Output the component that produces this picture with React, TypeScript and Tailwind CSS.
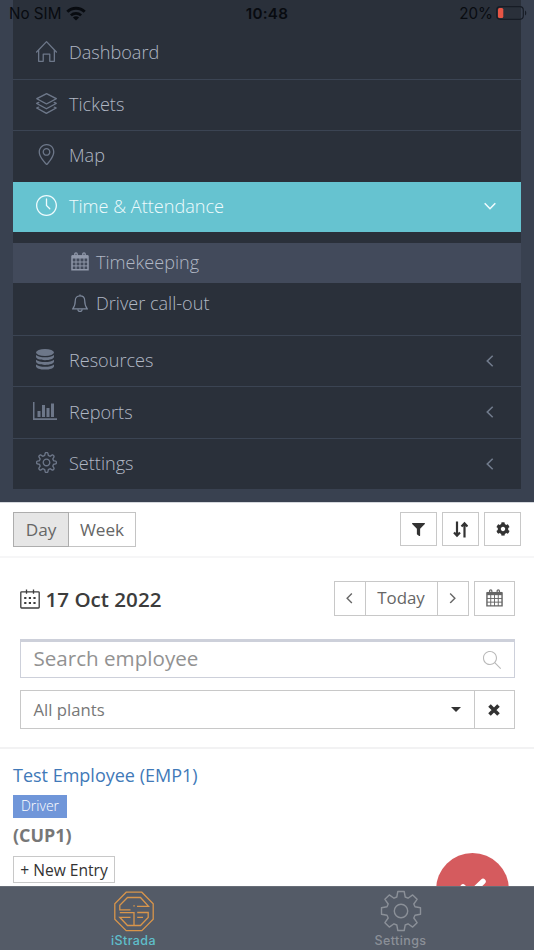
import type { ReactNode } from "react";
import clsx from "clsx";
import { FaCog, FaFilter } from "react-icons/fa";
import {
  SlClock,
  SlHome,
  SlLayers,
  SlLocationPin,
  SlMagnifier,
  SlSettings,
} from "react-icons/sl";

type IconProps = { className?: string };

function CalendarGrid({ className }: IconProps) {
  return (
    <svg viewBox="0 0 18 19" className={className} fill="none" stroke="currentColor">
      <path d="M1 4.2h16v13.6H1z" strokeWidth="1.5" />
      <path d="M1 4.800h16" strokeWidth="3.400" />
      <path d="M5 6v12M9 6v12M13 6v12M1 10h16M1 13.900h16" strokeWidth="1" />
      <rect x="3.800" y="0.800" width="2.400" height="4.400" rx="1.200" strokeWidth="1.300" />
      <rect x="11.800" y="0.800" width="2.400" height="4.400" rx="1.200" strokeWidth="1.300" />
    </svg>
  );
}

function CalendarDots({ className }: IconProps) {
  return (
    <svg viewBox="0 0 20 20" className={className} fill="none" stroke="currentColor" strokeWidth="1.300">
      <rect x="0.8" y="2.8" width="18.4" height="16.2" rx="0.8" />
      <path d="M6.5 0.5v4.2M13.5 0.5v4.2" />
      <path d="M4.200 9h11.5M4.200 14h11.5" strokeWidth="2.2" strokeDasharray="2.2 2.4" />
    </svg>
  );
}

function Bell({ className }: IconProps) {
  return (
    <svg viewBox="0 0 16 19" className={className} fill="none" stroke="currentColor" strokeWidth="1.200">
      <path d="M8 1.8c-3 0-4.7 2.1-4.7 4.8 0 4.3-.8 6.2-2.6 8.2h14.6c-1.8-2-2.6-3.9-2.6-8.2C12.700 3.900 11 1.800 8 1.800z" />
      <path d="M5.900 15.200c0 1.300.9 2.200 2.100 2.200s2.100-.9 2.100-2.200M8 .6v1.200" />
    </svg>
  );
}

function Database({ className }: IconProps) {
  return (
    <svg viewBox="0 0 18 21" className={className} fill="currentColor">
      <ellipse cx="9" cy="3.500" rx="9" ry="3.500" />
      <path d="M0 6c2 1.800 5 2.300 9 2.300S16 7.800 18 6v1.800c0 1.900-4 3.400-9 3.400S0 9.700 0 7.800z" />
      <path d="M0 10.700c2 1.800 5 2.300 9 2.300s7-.5 9-2.300v1.800c0 1.900-4 3.400-9 3.400s-9-1.500-9-3.400z" />
      <path d="M0 15.400c2 1.800 5 2.300 9 2.300s7-.5 9-2.300v1.800c0 1.900-4 3.400-9 3.400s-9-1.500-9-3.400z" />
    </svg>
  );
}

function BarChart({ className }: IconProps) {
  return (
    <svg viewBox="0 0 24 18" className={className} fill="currentColor">
      <path d="M0 0h1.500v16.300H24V18H0zM4.500 9h3v6h-3zM9 3h3v12H9zM13.500 6h3v9h-3zM18 1.500h3V15h-3z" />
    </svg>
  );
}

function Chevron({ className }: IconProps) {
  return (
    <svg viewBox="0 0 8 12" className={className} fill="none" stroke="currentColor" strokeWidth="1.600">
      <path d="M6.700 0.700 1.300 6l5.400 5.300" />
    </svg>
  );
}

function Wifi() {
  return (
    <svg viewBox="0 0 20 15" className="mb-px ml-[5px] h-[15px] w-5" fill="none" stroke="currentColor" strokeWidth="3">
      <path d="M1.300 5.700a12.400 12.400 0 0 1 17.400 0" />
      <path d="M4.900 9.400a7.300 7.300 0 0 1 10.200 0" strokeWidth="2.700" />
      <path d="M10 14.600 6.900 11.500a4.400 4.400 0 0 1 6.200 0z" fill="currentColor" stroke="none" />
    </svg>
  );
}

function StatusBar() {
  return (
    <div className="absolute inset-x-0 top-0 grid h-7 grid-cols-3 items-center pr-[7px] pl-[9px] font-['Inter',sans-serif] text-[15.200px] text-[#080b10]">
      <div className="flex items-center">
        No SIM
        <Wifi />
      </div>
      <div className="-ml-0.5 text-center font-semibold tracking-[0.3px]">10:48</div>
      <div className="flex items-center justify-end">
        20%
        <svg viewBox="0 0 31 14" className="mb-0.5 ml-[3px] h-3.500 w-[31px]" fill="none">
          <rect x="0.700" y="0.700" width="26.600" height="12.600" rx="3.500" stroke="#171c25" strokeWidth="1.200" />
          <rect x="2" y="2" width="5.300" height="10" rx="1.500" fill="#e75545" />
          <path d="M29 4.500c1.700.7 1.700 4.300 0 5z" fill="#171c25" />
        </svg>
      </div>
    </div>
  );
}

function NavItem({
  icon,
  label,
  expandable,
  active,
}: {
  icon: ReactNode;
  label: string;
  expandable?: boolean;
  active?: boolean;
}) {
  return (
    <div
      className={clsx(
        "flex items-center pr-[27px] pl-5 text-[18.100px] font-light",
        active
          ? "-mt-[0.800px] h-[50px] bg-[#66c3d0] pb-px text-[#f0fbfd]"
          : "h-[51.600px] border-b border-[#3b4453] pb-px text-[#b0b7c4]",
      )}
    >
      <span className={clsx("mr-3 mb-0.5 flex w-6 justify-end", !active && "text-[#6d7789]")}>{icon}</span>
      <span className="flex-1">{label}</span>
      {expandable && (
        <Chevron className={clsx("h-3 w-2", active ? "-rotate-90" : "text-[#717b8c]")} />
      )}
    </div>
  );
}

function Sidebar() {
  return (
    <nav className="h-[502px] bg-[#394150] px-[13px]">
      <div className="h-[489px] overflow-hidden bg-[#2a303a] pt-7">
        <NavItem icon={<SlHome className="size-[21px]" />} label="Dashboard" />
        <NavItem icon={<SlLayers className="size-[21px]" />} label="Tickets" />
        <NavItem icon={<SlLocationPin className="size-[21px]" />} label="Map" />
        <NavItem icon={<SlClock className="size-[21px]" />} label="Time & Attendance" expandable active />
        <div className="h-[103.800px] border-b border-[#3b4453] pt-[11px] text-[18.100px] font-light text-[#b0b7c4]">
          <div className="flex h-10 items-center bg-[#424a5b] pb-px pl-[58px]">
            <CalendarGrid className="mr-[7px] mb-px h-[19px] w-[18px] text-[#9098aa]" />
            Timekeeping
          </div>
          <div className="flex h-[41px] items-center pl-[58px]">
            <Bell className="mr-2 ml-px h-[19px] w-4 text-[#7c879a]" />
            Driver call-out
          </div>
        </div>
        <NavItem icon={<Database className="mr-[3px] h-[21px] w-[18px]" />} label="Resources" expandable />
        <NavItem icon={<BarChart className="h-[18px] w-6" />} label="Reports" expandable />
        <NavItem icon={<SlSettings className="size-[21px]" />} label="Settings" expandable />
      </div>
    </nav>
  );
}

function ToolButton({ children }: { children: ReactNode }) {
  return (
    <button className="flex h-[34px] w-[37px] items-center justify-center border border-[#c8c8c8] text-[#333]">
      {children}
    </button>
  );
}

function Toolbar() {
  return (
    <div className="flex h-[56px] items-start justify-between border-t border-b-2 border-t-[#d5d8dd] border-b-[#f6f6f7] px-[13px] pt-[9px]">
      <div className="flex text-[17.200px] text-[#666]">
        <button className="h-[35px] w-14 border border-[#adadad] bg-[#e6e6e6]">Day</button>
        <button className="h-[35px] w-[67px] border border-l-0 border-[#c4c4c4]">Week</button>
      </div>
      <div className="flex gap-[5px]">
        <ToolButton>
          <FaFilter className="size-[13px]" />
        </ToolButton>
        <ToolButton>
          <svg viewBox="0 0 15 17" className="h-[17px] w-[15px]" fill="none" stroke="currentColor" strokeWidth="2.200">
            <path d="M4 0.500v14M1 11.500l3 3.200 3-3.200M11.500 16.500v-14M8.500 5.500l3-3.200 3 3.200" />
          </svg>
        </ToolButton>
        <ToolButton>
          <FaCog className="size-[14px]" />
        </ToolButton>
      </div>
    </div>
  );
}

function Filters() {
  return (
    <div className="flex h-[191px] flex-col border-b-2 border-[#f2f2f3] pt-[23px] pr-[19.500px] pl-[19.500px]">
      <div className="flex items-start justify-between">
        <div className="flex h-[35px] items-center gap-[6px] text-[20.600px] font-semibold text-[#3c3c3c]">
          <CalendarDots className="size-5" />
          <span className="pt-0.5">17 Oct 2022</span>
        </div>
        <div className="flex text-[16.900px] text-[#666]">
          <button className="flex h-[35px] w-8 items-center justify-center border border-[#c8c8c8]">
            <Chevron className="h-2.500 w-[7px]" />
          </button>
          <button className="h-[35px] w-[71px] border-y border-[#c8c8c8] pb-0.5">Today</button>
          <button className="flex h-[35px] w-8 items-center justify-center border border-[#c8c8c8]">
            <Chevron className="h-2.500 w-[7px] rotate-180" />
          </button>
          <button className="ml-[5px] flex h-[35px] w-[41px] items-center justify-center border border-[#c8c8c8] pb-px">
            <CalendarGrid className="h-[18px] w-[17px]" />
          </button>
        </div>
      </div>
      <div className="mt-[23px] flex h-[39px] items-center justify-between border border-t-[3px] border-[#cdd0da] px-[13px] text-[20.600px] text-[#929292]">
        <span className="pb-[3px]">Search employee</span>
        <SlMagnifier className="size-[18px] text-[#b9b9b9]" />
      </div>
      <div className="mt-3 flex h-[39px] border border-[#c8c8c8]">
        <div className="flex flex-1 items-center justify-between px-[13px] text-[16.700px] text-[#777]">
          All plants
          <svg viewBox="0 0 10 5" className="h-[5px] w-2.500 fill-[#333]">
            <path d="M0 0h10L5 5z" />
          </svg>
        </div>
        <button className="flex w-10 items-center justify-center border-l border-[#c8c8c8]">
          <svg viewBox="0 0 12 12" className="size-3 stroke-[#333]" fill="none" strokeWidth="3.600">
            <path d="m1.500 1.500 9 9m0-9-9 9" />
          </svg>
        </button>
      </div>
    </div>
  );
}

function Employee() {
  return (
    <div className="flex flex-col items-start px-[13px] pt-[13px]">
      <a className="text-[18px] leading-[26px] text-[#4179b8]">Test Employee (EMP1)</a>
      <span className="mt-[7px] flex h-[23px] w-[54px] items-center justify-center bg-[#7096d9] pb-0.5 text-[14px] font-light text-white">
        Driver
      </span>
      <span className="mt-1 text-[17.900px] leading-[26px] font-bold text-[#777]">(CUP1)</span>
      <button className="mt-2 h-[27px] w-[102px] border border-[#c8c8c8] text-[15.600px] leading-6 whitespace-nowrap text-[#333]">
        + New Entry
      </button>
    </div>
  );
}

function IStradaLogo() {
  return (
    <svg viewBox="0 0 40 41" className="h-[41px] w-10" fill="none" stroke="#d8954b" strokeWidth="1.300">
      <path d="M12.200 1.200h15.600l11.400 11.500v15.600L27.800 39.700H12.200L.8 28.300V12.700z" />
      <path d="M23 15.300h11.500L26.500 6.500h-13L5.800 14.300v4.500H16.500" />
      <path d="M20 21.700H5.800M16.500 26.300H5.800L13.500 34.500h13l7.700-8v-5H23.200M23.200 26.300H29" />
      <path d="M20 21v13.500M19.300 14.800h1.500" />
    </svg>
  );
}

function GearOutline() {
  return (
    <svg viewBox="-21 -21 42 42" className="size-[42px]" fill="none" stroke="#8b9098" strokeWidth="1.400" strokeLinejoin="round">
      <path d="M-3.200-19.500H3.200L4.200-14 7-12.800 11.700-16.100 16.100-11.700 12.800-7 14-4.200 19.500-3.200V3.200L14 4.200 12.800 7 16.100 11.700 11.700 16.100 7 12.800 4.200 14 3.200 19.500H-3.200L-4.200 14-7 12.800-11.700 16.100-16.100 11.700-12.800 7-14 4.200-19.500 3.200V-3.200L-14-4.200-12.800-7-16.100-11.700-11.700-16.100-7-12.800-4.200-14z" />
      <circle r="6.700" />
    </svg>
  );
}

function TabBar() {
  return (
    <footer className="absolute inset-x-0 bottom-0 grid h-16 grid-cols-2 border-t border-[#676d77] bg-[#545b67] font-['Inter',sans-serif] text-[12.500px] leading-4 font-medium tracking-[0.4px]">
      <div className="flex flex-col items-center pt-1 text-[#5fbfcb]">
        <IStradaLogo />
        <span className="mt-px">iStrada</span>
      </div>
      <div className="flex flex-col items-center pt-[3px] text-[#8b9098]">
        <GearOutline />
        <span className="mt-px">Settings</span>
      </div>
    </footer>
  );
}

export default function App() {
  return (
    <div className="relative h-[950px] w-[534px] overflow-hidden bg-white font-['Open_Sans',sans-serif]">
      <Sidebar />
      <StatusBar />
      <Toolbar />
      <Filters />
      <Employee />
      <button className="absolute top-[853px] left-[436px] flex size-[73px] items-center justify-center rounded-full bg-[#d55b5e]">
        <svg viewBox="0 0 28 22" className="mb-1 h-[22px] w-7" fill="none" stroke="white" strokeWidth="5.500" strokeLinecap="round">
          <path d="m4 10 7 7L24 4.500" />
        </svg>
      </button>
      <TabBar />
    </div>
  );
}
